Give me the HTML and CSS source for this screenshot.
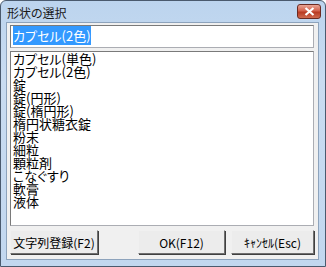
FILE: index.html
```html
<!DOCTYPE html>
<html lang="ja">
<head>
    <meta charset="UTF-8">
    <title>形状の選択</title>
    <link rel="stylesheet" href="styles.css">
</head>
<body>
<div class="window">
    <div class="titlebar">
        <span class="title">形状の選択</span>
        <button class="close" title="閉じる">
            <svg width="11" height="9" viewBox="0 0 11 9">
                <path d="M1.5 1 L9.5 8 M9.5 1 L1.5 8" stroke="#fff" stroke-width="2.2" fill="none"/>
            </svg>
        </button>
    </div>
    <div class="client">
        <div class="edit"><span class="selected">カプセル(2色)</span></div>

        <ul class="list">
            <li>カプセル(単色)</li>
            <li>カプセル(2色)</li>
            <li>錠</li>
            <li>錠(円形)</li>
            <li>錠(楕円形)</li>
            <li>楕円状糖衣錠</li>
            <li>粉末</li>
            <li>細粒</li>
            <li>顆粒剤</li>
            <li>こなぐすり</li>
            <li>軟膏</li>
            <li>液体</li>
        </ul>

        <div class="buttons">
            <button class="btn btn-reg">文字列登録(F2)</button>
            <div class="spacer"></div>
            <button class="btn btn-ok">OK(F12)</button>
            <button class="btn btn-cancel">ｷｬﾝｾﾙ(Esc)</button>
        </div>
    </div>
</div>
</body>
</html>
```

FILE: styles.css
```css
body {
    margin: 0;
    padding: 0;
    font-family: "Noto Sans CJK JP", "Noto Sans", sans-serif;
    font-size: 12px;
    font-feature-settings: "palt" 1;
    color: #000;
}

.window {
    width: 326px;
    height: 267px;
    box-sizing: border-box;
    border: 1px solid #4a5a6e;
    border-radius: 6px 6px 0 0;
    background: linear-gradient(to bottom, #bcd4ee, #c9dcf1 30%, #c2d7ef);
    display: flex;
    flex-direction: column;
}

.titlebar {
    height: 21px;
    display: flex;
    align-items: center;
    justify-content: space-between;
    padding: 0 4px 0 6px;
}

.title {
    font-size: 12px;
    color: #1a1a1a;
    margin-top: 1px;
}

.close {
    width: 24px;
    height: 15px;
    border: 1px solid #6b2a22;
    border-radius: 3px;
    background: linear-gradient(to bottom, #e9a595, #d3624c 45%, #b83a22 55%, #cf6a4f);
    display: flex;
    align-items: center;
    justify-content: center;
    padding: 0;
}

.client {
    flex: 1;
    margin: 0 6px 6px 5px;
    border: 1px solid #8da3bc;
    background: #f0f0f0;
    padding: 2px 4px 4px 3px;
    display: flex;
    flex-direction: column;
}

.edit {
    height: 20px;
    border: 1px solid #abadb3;
    border-top-color: #7a7a7a;
    border-left-color: #7a7a7a;
    background: #fff;
    padding: 1px 0 0 2px;
    line-height: 17px;
    font-size: 13px;
}

.selected {
    background: #3399ff;
    color: #fff;
}

.list {
    list-style: none;
    margin: 3px 0 0 0;
    padding: 0 2px;
    height: 175px;
    box-sizing: border-box;
    border: 1px solid #abadb3;
    border-top-color: #7a7a7a;
    border-left-color: #7a7a7a;
    background: #fff;
    font-size: 13px;
    line-height: 13px;
}

.buttons {
    display: flex;
    margin-top: 4px;
    gap: 6px;
}

.spacer {
    flex: 1;
}

.btn {
    height: 24px;
    font-family: inherit;
    font-feature-settings: inherit;
    font-size: 12px;
    border: 1px solid #707070;
    border-top-color: #f0f0f0;
    border-left-color: #f0f0f0;
    box-shadow: 1px 1px 0 #404040;
    background: #ececec;
    padding: 0;
}

.btn-reg { width: 88px; }
.btn-ok { width: 87px; }
.btn-cancel { width: 83px; }
```
